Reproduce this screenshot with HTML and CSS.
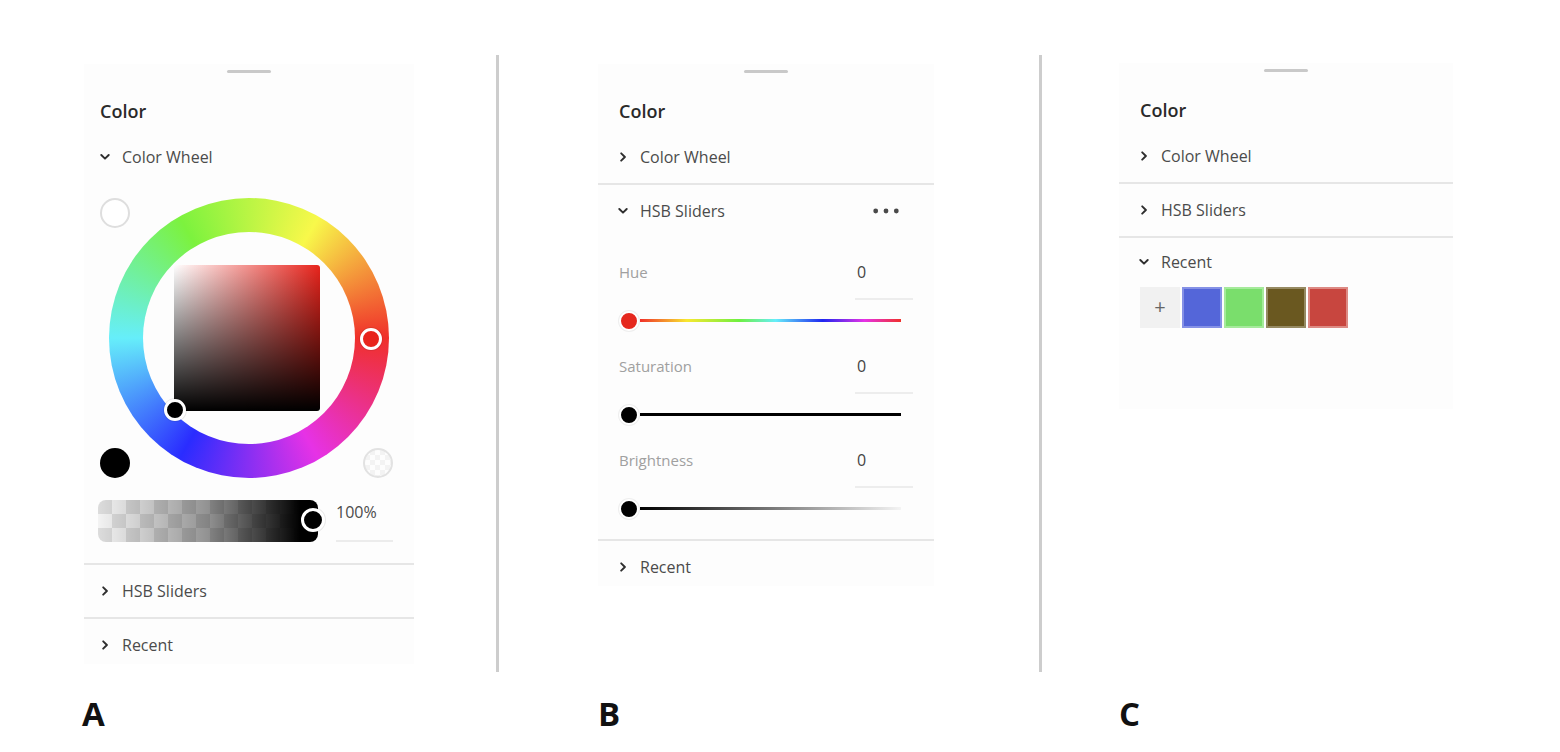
FILE: index.html
```html
<!DOCTYPE html>
<html lang="en">
<head>
<meta charset="utf-8">
<title>Color panels</title>
<link rel="stylesheet" href="styles.css">
</head>
<body>
<main class="board">
  <section class="col col-a">
    <div class="stage">
      <div class="panel panel-a">
        <div class="grip"></div>
        <h2 class="title">Color</h2>
        <div class="row">
          <svg class="chev" viewBox="0 0 10 10"><path d="M1.3 3 L5 6.7 L8.7 3"/></svg>
          <span>Color Wheel</span>
        </div>
        <div class="wheel-area">
          <span class="dot dot-empty"></span>
          <span class="dot dot-black"></span>
          <span class="dot dot-clear"></span>
          <div class="ring">
            <div class="hole">
              <div class="sv"><span class="knob knob-sv"></span></div>
            </div>
            <span class="knob knob-hue"></span>
          </div>
        </div>
        <div class="alpha-row">
          <div class="alpha"><span class="knob knob-alpha"></span></div>
          <div class="field">100%</div>
        </div>
        <div class="sep"></div>
        <div class="row">
          <svg class="chev" viewBox="0 0 10 10"><path d="M3.2 1.3 L6.9 5 L3.2 8.7"/></svg>
          <span>HSB Sliders</span>
        </div>
        <div class="sep"></div>
        <div class="row tail">
          <svg class="chev" viewBox="0 0 10 10"><path d="M3.2 1.3 L6.9 5 L3.2 8.7"/></svg>
          <span>Recent</span>
        </div>
      </div>
    </div>
    <div class="letter">A</div>
  </section>

  <div class="vr"></div>

  <section class="col col-b">
    <div class="stage">
      <div class="panel panel-b">
        <div class="grip"></div>
        <h2 class="title">Color</h2>
        <div class="row">
          <svg class="chev" viewBox="0 0 10 10"><path d="M3.2 1.3 L6.9 5 L3.2 8.7"/></svg>
          <span>Color Wheel</span>
        </div>
        <div class="sep"></div>
        <div class="row">
          <svg class="chev" viewBox="0 0 10 10"><path d="M1.3 3 L5 6.7 L8.7 3"/></svg>
          <span>HSB Sliders</span>
          <svg class="more" viewBox="0 0 26 6"><circle cx="2.7" cy="3" r="2.4"/><circle cx="13" cy="3" r="2.4"/><circle cx="23.3" cy="3" r="2.4"/></svg>
        </div>
        <div class="sliders">
          <div class="group">
            <div class="field-row"><span class="flabel">Hue</span><span class="fvalue">0</span></div>
            <div class="track-row"><span class="handle handle-red"></span><span class="track track-hue"></span></div>
          </div>
          <div class="group">
            <div class="field-row"><span class="flabel">Saturation</span><span class="fvalue">0</span></div>
            <div class="track-row"><span class="handle"></span><span class="track track-sat"></span></div>
          </div>
          <div class="group">
            <div class="field-row"><span class="flabel">Brightness</span><span class="fvalue">0</span></div>
            <div class="track-row"><span class="handle"></span><span class="track track-bri"></span></div>
          </div>
        </div>
        <div class="sep"></div>
        <div class="row tail">
          <svg class="chev" viewBox="0 0 10 10"><path d="M3.2 1.3 L6.9 5 L3.2 8.7"/></svg>
          <span>Recent</span>
        </div>
      </div>
    </div>
    <div class="letter">B</div>
  </section>

  <div class="vr"></div>

  <section class="col col-c">
    <div class="stage">
      <div class="panel panel-c">
        <div class="grip"></div>
        <h2 class="title">Color</h2>
        <div class="row">
          <svg class="chev" viewBox="0 0 10 10"><path d="M3.2 1.3 L6.9 5 L3.2 8.7"/></svg>
          <span>Color Wheel</span>
        </div>
        <div class="sep"></div>
        <div class="row">
          <svg class="chev" viewBox="0 0 10 10"><path d="M3.2 1.3 L6.9 5 L3.2 8.7"/></svg>
          <span>HSB Sliders</span>
        </div>
        <div class="sep"></div>
        <div class="row row-open">
          <svg class="chev" viewBox="0 0 10 10"><path d="M1.3 3 L5 6.7 L8.7 3"/></svg>
          <span>Recent</span>
        </div>
        <div class="swatches">
          <span class="swatch swatch-add">+</span>
          <span class="swatch swatch-blue"></span>
          <span class="swatch swatch-green"></span>
          <span class="swatch swatch-olive"></span>
          <span class="swatch swatch-red"></span>
        </div>
      </div>
    </div>
    <div class="letter">C</div>
  </section>
</main>
</body>
</html>
```

FILE: styles.css
```css
html, body {
  margin: 0;
  padding: 0;
  background: #ffffff;
}

body {
  width: 1560px;
  height: 752px;
  overflow: hidden;
  font-family: "Open Sans", "Noto Sans", "Liberation Sans", sans-serif;
  color: #4b4b4b;
}

.board {
  display: flex;
  align-items: flex-start;
  padding: 55px 0 0 84px;
}

.col {
  display: flex;
  flex-direction: column;
  box-sizing: border-box;
  flex: none;
}

.col-a { width: 412px; }
.col-b { width: 540px; padding-left: 99px; }
.col-c { padding-left: 77px; }

.vr {
  flex: none;
  width: 3px;
  height: 617px;
  background: #cdcdcd;
}

.stage {
  height: 617px;
}

.letter {
  margin-top: 26px;
  font-size: 33px;
  line-height: 32px;
  font-weight: 700;
  color: #111;
}

.col-a .letter { margin-left: -2px; }

/* panel */
.panel {
  margin-top: 9px;
  padding-top: 6px;
  background: #fdfdfd;
}

.panel-a { width: 330px; }
.panel-b { width: 336px; }
.panel-c { width: 334px; margin-top: 8px; }

.grip {
  width: 44px;
  height: 3px;
  border-radius: 2px;
  background: #c9c9c9;
  margin: 0 auto;
}

.title {
  margin: 18px 0 0;
  height: 40px;
  line-height: 40px;
  padding-left: 21px;
  font-size: 18px;
  font-weight: 600;
  color: #2a2a2a;
}

.panel-a .title { padding-left: 16px; }

.row {
  display: flex;
  align-items: center;
  box-sizing: border-box;
  height: 52px;
  padding-left: 20px;
  font-size: 16px;
  color: #4b4b4b;
}

.panel-a .row { padding-left: 16px; }

.row.tail {
  height: 45px;
  padding-top: 6px;
}

.row.row-open { height: 48px; }

.chev {
  flex: none;
  width: 10px;
  height: 10px;
  margin-right: 12px;
  fill: none;
  stroke: #2e2e2e;
  stroke-width: 1.9;
  stroke-linecap: round;
  stroke-linejoin: round;
}

.more {
  width: 26px;
  height: 6px;
  margin-left: auto;
  margin-right: 35px;
  fill: #4a4a4a;
}

.sep {
  height: 2px;
  background: #e6e6e6;
}

/* color wheel */
.wheel-area {
  position: relative;
  height: 307px;
  padding-top: 15px;
  box-sizing: border-box;
}

.dot {
  position: absolute;
  width: 30px;
  height: 30px;
  border-radius: 50%;
  box-sizing: border-box;
}

.dot-empty {
  left: 16px;
  top: 15px;
  border: 2px solid #dedede;
  background: #fff;
}

.dot-black {
  left: 16px;
  top: 265px;
  background: #000;
}

.dot-clear {
  left: 279px;
  top: 265px;
  border: 2px solid #e2e2e2;
  background:
    repeating-conic-gradient(#f3f3f3 0 25%, #fdfdfd 0 50%) 0 0 / 10px 10px;
}

.ring {
  position: relative;
  width: 280px;
  height: 280px;
  margin: 0 auto;
  border-radius: 50%;
  display: grid;
  place-items: center;
  background: conic-gradient(from 90deg,
    #f0302a 0deg,
    #e632e6 60deg,
    #2a2cff 120deg,
    #66eefa 180deg,
    #7cf23e 240deg,
    #f8f84a 300deg,
    #f0302a 360deg);
}

.hole {
  width: 212px;
  height: 212px;
  border-radius: 50%;
  background: #fdfdfd;
  display: grid;
  place-items: center;
}

.sv {
  position: relative;
  width: 146px;
  height: 146px;
  border-radius: 3px;
  background:
    linear-gradient(to top, #000 0%, rgba(0,0,0,0) 100%),
    linear-gradient(to right, #ffffff 0%, #e8241c 100%);
  margin-left: -4px;
}

.knob {
  position: absolute;
  width: 22px;
  height: 22px;
  border-radius: 50%;
  box-sizing: border-box;
  border: 3px solid #fff;
  box-shadow: 0 0 0 1px rgba(0,0,0,0.08);
}

.knob-hue {
  left: 251px;
  top: 130px;
  background: #e8241c;
}

.knob-sv {
  left: -10px;
  top: 134px;
  background: #000;
}

.knob-alpha {
  width: 24px;
  height: 24px;
  left: 203px;
  top: 8px;
  background: #000;
}

/* alpha */
.alpha-row {
  display: flex;
  align-items: flex-start;
  margin-top: 10px;
  margin-bottom: 21px;
  padding-left: 14px;
}

.alpha {
  position: relative;
  width: 220px;
  height: 42px;
  border-radius: 8px;
  background:
    linear-gradient(to right, rgba(0,0,0,0) 0%, rgba(0,0,0,0.4) 50%, #000 92%),
    repeating-conic-gradient(#f3f3f3 0 25%, #dcdcdc 0 50%) 0 0 / 28px 28px;
}

.field {
  width: 57px;
  height: 42px;
  margin-left: 18px;
  box-sizing: border-box;
  border-bottom: 2px solid #ececec;
  line-height: 24px;
  font-size: 16px;
  color: #4b4b4b;
}

/* HSB sliders */
.sliders {
  padding-top: 10px;
  padding-bottom: 10px;
}

.group {
  padding-top: 7px;
}

.field-row {
  display: flex;
  justify-content: space-between;
  align-items: flex-start;
  height: 46px;
  padding: 0 21px;
}

.flabel {
  line-height: 36px;
  font-size: 15px;
  color: #a0a0a0;
}

.fvalue {
  box-sizing: border-box;
  width: 58px;
  height: 46px;
  padding-left: 2px;
  line-height: 36px;
  font-size: 16px;
  color: #444;
  border-bottom: 2px solid #ededed;
}

.track-row {
  display: flex;
  align-items: center;
  height: 41px;
  padding: 0 33px 0 21px;
}

.handle {
  flex: none;
  width: 20px;
  height: 20px;
  border-radius: 50%;
  box-sizing: border-box;
  border: 2px solid #fff;
  background: #000;
  box-shadow: 0 0 0 1px rgba(0,0,0,0.06);
}

.handle-red { background: #e5281e; }

.track {
  flex: 1;
  height: 3px;
  margin-left: 1px;
}

.track-hue {
  background: linear-gradient(to right,
    #f0302a 0%, #f8e830 18%, #6ef040 38%, #66eefa 52%,
    #1f26f0 70%, #e632e6 86%, #f0302a 100%);
}

.track-sat { background: #000; }

.track-bri {
  background: linear-gradient(to right, #000 0%, #777 50%, #f4f4f4 100%);
}

/* recent swatches */
.swatches {
  display: flex;
  gap: 2px;
  margin-top: 1px;
  padding: 0 0 81px 21px;
}

.swatch {
  width: 40px;
  height: 41px;
  box-sizing: border-box;
}

.swatch-add {
  background: #f1f1f1;
  color: #666;
  font-size: 20px;
  line-height: 40px;
  text-align: center;
}

.swatch-blue  { background: #5466d9; border: 2px solid #8591e6; }
.swatch-green { background: #7ade6c; border: 2px solid #a5ea9b; }
.swatch-olive { background: #6a5820; border: 2px solid #968a62; }
.swatch-red   { background: #c8463f; border: 2px solid #dd8a84; }
```
